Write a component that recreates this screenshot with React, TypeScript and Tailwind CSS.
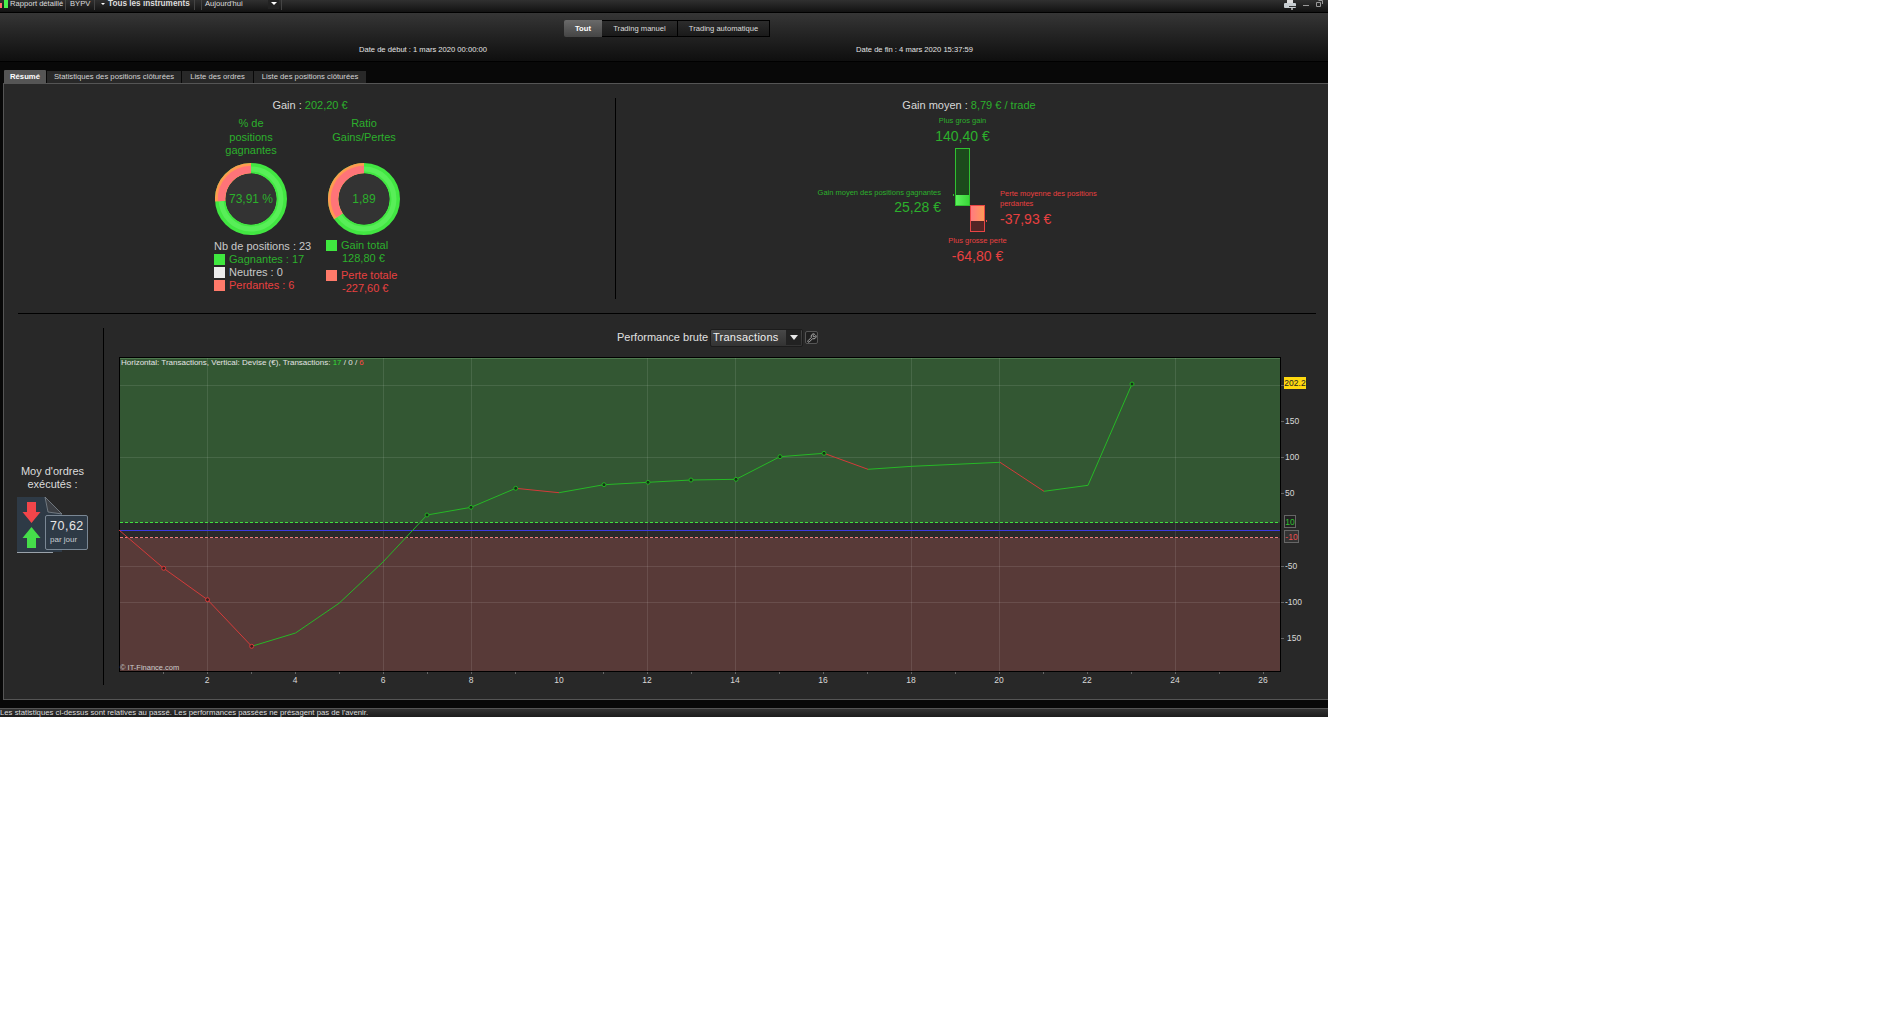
import React from 'react';
import { Wrench } from 'lucide-react';

const points: [number, number][] = [
  [119, 530], [163.7, 568.3], [207.5, 599.7], [251.7, 646.3], [295.5, 633], [339, 603.3],
  [383, 562], [427, 515], [471, 507.3], [515.7, 488.3], [559, 492.7], [604, 484.7],
  [648, 482.3], [691, 480], [736, 479.3], [780, 456.7], [824, 453.3], [868, 469.3],
  [912, 466.3], [956, 464.3], [1000, 462.3], [1044, 491.3], [1088, 485.3], [1132, 384],
];
const redMarkers = [1, 2, 3];
const greenMarkers = [7, 8, 9, 11, 12, 13, 14, 15, 16, 23];
const gridX = [207, 383, 471, 647, 735, 911, 999, 1175];
const gridY = [385.5, 457.5, 566.5, 602.5];
const xLabels = [2, 4, 6, 8, 10, 12, 14, 16, 18, 20, 22, 24, 26];
const yLabels: [string, number, number][] = [
  ['150', 421, 1285], ['100', 457, 1285], ['50', 493, 1285], ['-50', 566, 1285], ['-100', 602, 1285], ['150', 638, 1287],
];

const Chart = () => (
  <svg width="1209" height="333" viewBox="119 357 1209 333" className="block ml-[15px]" fontFamily="'Liberation Sans', Arial, sans-serif">
    <rect x="119.5" y="357.5" width="1161" height="314" fill="#2a2a2a" />
    <rect x="120" y="358" width="1160" height="164.5" fill="#335733" />
    <rect x="120" y="538" width="1160" height="133" fill="#583a38" />
    <rect x="120" y="358" width="1160" height="1" fill="#4f7a4f" />
    {gridX.map(x => <line key={x} x1={x + 0.5} x2={x + 0.5} y1="358" y2="671" stroke="#ffffff" strokeOpacity="0.1" />)}
    {gridY.map(y => <line key={y} x1="120" x2="1280" y1={y} y2={y} stroke="#ffffff" strokeOpacity="0.1" />)}
    <line x1="120" x2="1280" y1="522.5" y2="522.5" stroke="#3fe03f" strokeDasharray="3 2" />
    <line x1="120" x2="1280" y1="537.5" y2="537.5" stroke="#ef7a7a" strokeDasharray="3 2" />
    <line x1="120" x2="1280" y1="530.5" y2="530.5" stroke="#3a3ae0" />
    <rect x="119.5" y="357.5" width="1161" height="314" fill="none" stroke="#000000" />
    {points.slice(1).map((p, i) => (
      <line key={i} x1={points[i][0]} y1={points[i][1]} x2={p[0]} y2={p[1]} stroke={p[1] > points[i][1] ? '#d43a3a' : '#26b826'} />
    ))}
    {redMarkers.map(i => <circle key={i} cx={points[i][0]} cy={points[i][1]} r="2" fill="#3a2020" stroke="#d93a3a" />)}
    {greenMarkers.map(i => <circle key={i} cx={points[i][0]} cy={points[i][1]} r="2" fill="#163016" stroke="#22b022" />)}
    <text x="121" y="365" fontSize="8" fill="#e4e4e4">
      Horizontal: Transactions, Vertical: Devise (€), Transactions: <tspan fill="#33dd33">17</tspan> / 0 / <tspan fill="#ff4444">6</tspan>
    </text>
    <text x="120" y="670" fontSize="7.5" fill="#cccccc">© IT-Finance.com</text>
    {Array.from({ length: 26 }, (_, i) => i + 1).map(n => (
      <line key={n} x1={119.5 + 44 * n} x2={119.5 + 44 * n} y1="672" y2="674" stroke="#666666" />
    ))}
    {xLabels.map(n => <text key={n} x={119 + 44 * n} y="683" fontSize="8.5" fill="#d8d8d8" textAnchor="middle">{n}</text>)}
    {[385.5, 421.5, 457.5, 493.5, 566.5, 602.5, 638.5].map(y => <line key={y} x1="1281" x2="1284" y1={y} y2={y} stroke="#666666" />)}
    {yLabels.map(([t, y, x]) => <text key={y} x={x} y={y + 3} fontSize="8.5" fill="#d8d8d8">{t}</text>)}
    <rect x="1284" y="377" width="22" height="12" fill="#ffd90f" />
    <text x="1295" y="386" fontSize="8.5" fill="#222222" textAnchor="middle">202.2</text>
    <rect x="1284.5" y="515.5" width="11" height="12" fill="#222222" stroke="#666666" />
    <text x="1290" y="525" fontSize="8.5" fill="#30c030" textAnchor="middle">10</text>
    <rect x="1284.5" y="530.5" width="14" height="12" fill="#333333" stroke="#666666" />
    <text x="1291.5" y="540" fontSize="8.5" fill="#e85050" textAnchor="middle">-10</text>
  </svg>
);

const arc = (r: number, deg: number) => {
  const a = (deg * Math.PI) / 180;
  return `M 36 ${36 - r} A ${r} ${r} 0 0 0 ${36 - r * Math.sin(a)} ${36 - r * Math.cos(a)}`;
};

const Donut = ({ red, label }: { red: number; label: string }) => (
  <div className="relative w-[72px] h-[72px] mx-auto">
    <svg width="72" height="72" viewBox="0 0 72 72" className="block">
      <circle cx="36" cy="36" r="30.7" fill="none" stroke="#42e642" strokeWidth="10.6" />
      <circle cx="36" cy="36" r="30" fill="none" stroke="#58ee58" strokeWidth="5" />
      <path d={arc(30.7, red)} fill="none" stroke="#ff9a50" strokeWidth="10.6" />
      <path d={arc(29.5, red)} fill="none" stroke="#ff7478" strokeWidth="7.5" />
      <circle cx="36" cy="36" r="25.4" fill="#333333" />
    </svg>
    <span className="absolute inset-0 flex items-center justify-center text-[12px] text-[#2cb02c]">{label}</span>
  </div>
);

const Swatch = ({ color }: { color: string }) => <span className={`w-[11px] h-[11px] shrink-0 ${color}`} />;

const DocIcon = () => (
  <div className="relative w-[71px] h-[56px] mt-[6px]">
    <svg width="46" height="56" viewBox="0 0 46 56" className="block">
      <path d="M0 0 H28 L45 17 V55 H0 Z" fill="#2e3a46" />
      <path d="M28 0 L45 17 L31 15 Z" fill="#3c3f44" stroke="#8a929a" strokeWidth="0.7" />
      <line x1="0" x2="36" y1="55.5" y2="55.5" stroke="#9aa2aa" />
      <path d="M10 5 H19 V15 H23.5 L14.5 26 L5.5 15 H10 Z" fill="#f2454a" />
      <path d="M10 51 H19 V41 H23.5 L14.5 30 L5.5 41 H10 Z" fill="#45dd4a" />
    </svg>
    <div className="absolute left-[28px] top-[18px] w-[43px] h-[35px] rounded-[2px] border border-[#7a8794] bg-[#2e3a46] pl-[4px] pt-[3px] text-[#e6e6e6]">
      <div className="text-[12.5px] leading-[15px] tracking-[0.5px]">70,62</div>
      <div className="text-[8px] leading-[11px] text-[#c8ccd0]">par jour</div>
    </div>
  </div>
);

export default function App() {
  return (
    <div className="min-h-screen bg-white font-['Liberation_Sans',Arial,sans-serif]">
      <div className="w-[1328px] h-[717px] overflow-hidden flex flex-col bg-[#080808]">
        {/* top toolbar */}
        <div className="h-[13px] shrink-0 flex items-start overflow-hidden whitespace-nowrap border-b border-black bg-gradient-to-b from-[#303030] to-[#121212] text-[7.6px] leading-[7px] text-[#dddddd]">
          <svg width="9" height="9" viewBox="0 0 9 9" className="shrink-0">
            <rect x="0" y="3" width="2" height="5" fill="#ff6a6a" />
            <rect x="4" y="0" width="4" height="8" fill="#4cf04c" />
          </svg>
          <span className="w-[57px] pl-[1px] border-r border-[#444] h-[10px]">Rapport détaillé</span>
          <span className="w-[29px] pl-[4px] border-r border-[#444] h-[10px]">BYPV</span>
          <span className="w-[100px] flex gap-[3px] pl-[6px] border-r border-[#444] h-[10px] font-bold text-[8.2px]">
            <span className="mt-[3px] w-0 h-0 border-x-[2px] border-x-transparent border-t-[2px] border-t-white" />
            <span>Tous les instruments</span>
          </span>
          <span className="ml-[6px] w-[81px] flex justify-between pl-[3px] pr-[2px] border-x border-[#444] h-[10px]">
            <span>Aujourd'hui</span>
            <span className="w-[11px] h-[9px] flex justify-center pt-[2px] bg-[#222]">
              <span className="w-0 h-0 border-x-[3px] border-x-transparent border-t-[3px] border-t-white" />
            </span>
          </span>
          <div className="ml-auto mr-[5px] flex items-start gap-[7px]">
            <svg width="12" height="10" viewBox="0 0 12 10">
              <rect x="3" y="0" width="6" height="3" fill="#dddddd" />
              <rect x="0" y="3" width="12" height="5" rx="1" fill="#c8ced2" />
              <rect x="5" y="6" width="7" height="1" fill="#333333" />
              <rect x="7" y="8" width="2" height="2" fill="#999999" />
            </svg>
            <span className="mt-[5px] w-[6px] h-[1px] bg-[#999]" />
            <svg width="7" height="7" viewBox="0 0 7 7">
              <path d="M2.5 .5 H6.5 V4 M.5 2.5 H4.5 V6.5 H.5 Z" fill="none" stroke="#999999" />
            </svg>
          </div>
        </div>

        {/* period selector */}
        <div className="h-[49px] shrink-0 border-b border-black bg-gradient-to-b from-[#363636] to-[#0f0f0f]">
          <div className="ml-[564px] mt-[7px] flex h-[17px] text-[7.6px] text-[#dddddd]">
            <span className="w-[38px] flex items-center justify-center rounded-l-[2px] bg-gradient-to-b from-[#6a6a6a] to-[#454545] font-bold text-white">Tout</span>
            <span className="w-[76px] flex items-center justify-center border-y border-r border-black bg-gradient-to-b from-[#2c2c2c] to-[#1a1a1a]">Trading manuel</span>
            <span className="w-[92px] flex items-center justify-center border-y border-r border-black bg-gradient-to-b from-[#2c2c2c] to-[#1a1a1a]">Trading automatique</span>
          </div>
          <div className="flex mt-[7px] text-[7.6px] leading-[12px] text-[#e4e4e4] whitespace-nowrap">
            <span className="ml-[359px] w-[128px]">Date de début : 1 mars 2020 00:00:00</span>
            <span className="ml-[369px]">Date de fin : 4 mars 2020 15:37:59</span>
          </div>
        </div>

        {/* tabs */}
        <div className="h-[21px] shrink-0 flex items-end pl-[4px] gap-[1px] bg-[#080808] text-[7.7px] text-[#d4d4d4] whitespace-nowrap">
          <span className="w-[42px] h-[13px] flex items-center justify-center rounded-t-[1px] bg-[#555555] text-white font-bold">Résumé</span>
          <span className="w-[134px] h-[12px] flex items-center justify-center bg-[#282828]">Statistiques des positions clôturées</span>
          <span className="w-[71px] h-[12px] flex items-center justify-center bg-[#282828]">Liste des ordres</span>
          <span className="w-[112px] h-[12px] flex items-center justify-center bg-[#282828]">Liste des positions clôturées</span>
        </div>

        {/* main panel */}
        <div className="h-[617px] shrink-0 ml-[3px] border-t border-l border-b border-[#555555] bg-[#282828] text-[11px]">
          <div className="flex h-[229px]">
            {/* left summary */}
            <div className="w-[612px] shrink-0 relative flex flex-col">
              <div className="mt-[14px] h-[14px] leading-[14px] text-center text-[#d8d8d8]">
                Gain : <span className="text-[#2cb02c]">202,20 €</span>
              </div>
              <div className="mt-[4px] pl-[197px] flex gap-[13px]">
                <div className="w-[100px]">
                  <div className="h-[47px] w-[70px] mx-auto pt-[1px] text-center leading-[13.5px] text-[#2cb02c]">% de positions gagnantes</div>
                  <Donut red={94} label="73,91 %" />
                  <div className="mt-[5px] pl-[13px] leading-[13px] whitespace-nowrap">
                    <div className="text-[#c8c8c8]">Nb de positions : 23</div>
                    <div className="flex items-center gap-[4px] text-[#2cb02c]"><Swatch color="bg-[#3fe83f]" />Gagnantes : 17</div>
                    <div className="flex items-center gap-[4px] text-[#c8c8c8]"><Swatch color="bg-[#ececec]" />Neutres : 0</div>
                    <div className="flex items-center gap-[4px] text-[#e84040]"><Swatch color="bg-[#ff7a6a]" />Perdantes : 6</div>
                  </div>
                </div>
                <div className="w-[100px]">
                  <div className="h-[47px] pt-[1px] text-center leading-[13.5px] text-[#2cb02c]">Ratio<br />Gains/Pertes</div>
                  <Donut red={124} label="1,89" />
                  <div className="mt-[4px] pl-[12px] leading-[13px] whitespace-nowrap">
                    <div className="flex items-center gap-[4px] h-[13px] text-[#2cb02c]"><Swatch color="bg-[#3fe83f]" />Gain total</div>
                    <div className="pl-[16px] text-[#2cb02c]">128,80 €</div>
                    <div className="mt-[4px] flex items-center gap-[4px] h-[13px] text-[#e84040]"><Swatch color="bg-[#ff7a6a]" />Perte totale</div>
                    <div className="pl-[16px] text-[#e84040]">-227,60 €</div>
                  </div>
                </div>
              </div>
              <div className="absolute right-0 top-[14px] h-[201px] w-px bg-black" />
            </div>

            {/* right summary */}
            <div className="flex-1 flex flex-col">
              <div className="mt-[14px] h-[14px] leading-[14px] text-center pr-[6px] text-[#d8d8d8]">
                Gain moyen : <span className="text-[#2cb02c]">8,79 € / trade</span>
              </div>
              <div className="mt-[4px] ml-[201px] flex items-start">
                <div className="w-[124px] pt-[72px] text-right text-[#2cb02c] whitespace-nowrap">
                  <div className="text-[7.5px] leading-[10px]">Gain moyen des positions gagnantes</div>
                  <div className="mt-[1px] text-[14px] leading-[16px]">25,28 €</div>
                </div>
                <div className="ml-[14px] w-[30px]">
                  <div className="ml-[-25px] mr-[-10px] h-[32px] text-center whitespace-nowrap text-[#2cb02c]">
                    <div className="h-[12px] text-[7.5px] leading-[10px]">Plus gros gain</div>
                    <div className="text-[14px] leading-[16px]">140,40 €</div>
                  </div>
                  <div className="relative w-[15px] h-[58px] flex flex-col justify-end border border-[#30c030] bg-[#1c4a1c]">
                    <div className="h-[10px] bg-gradient-to-r from-[#5cf05c] to-[#38d838]" />
                    <span className="absolute left-[-3px] bottom-[9px] w-px h-[2px] bg-[#30c030]" />
                  </div>
                  <div className="relative ml-[15px] mt-[-1px] w-[15px] h-[27px] border border-[#e84545] bg-[#532525]">
                    <div className="h-[15px] bg-gradient-to-r from-[#ff7a80] to-[#ff9a55]" />
                    <span className="absolute right-[-3px] top-[14px] w-px h-[2px] bg-[#e84545]" />
                  </div>
                  <div className="ml-[-10px] mr-[-25px] mt-[4px] text-center whitespace-nowrap text-[#e84040]">
                    <div className="h-[12px] text-[7.5px] leading-[10px]">Plus grosse perte</div>
                    <div className="text-[14px] leading-[16px]">-64,80 €</div>
                  </div>
                </div>
                <div className="ml-[15px] w-[100px] pt-[73px] text-[#e84040]">
                  <div className="text-[7.5px] leading-[10px]">Perte moyenne des positions perdantes</div>
                  <div className="mt-[2px] text-[14px] leading-[16px]">-37,93 €</div>
                </div>
              </div>
            </div>
          </div>

          <div className="h-px ml-[14px] mr-[12px] bg-black" />

          <div className="flex pt-[14px]">
            <div className="w-[100px] h-[357px] shrink-0 border-r border-black flex flex-col items-center pt-[137px] pr-[2px] text-[#dcdcdc]">
              <div className="text-center leading-[13px] whitespace-nowrap">Moy d'ordres<br />exécutés :</div>
              <DocIcon />
            </div>
            <div className="flex-1">
              <div className="h-[19px] mb-[10px] ml-[513px] flex items-center text-[#e0e0e0] whitespace-nowrap">
                <span className="w-[93px]">Performance brute</span>
                <div className="w-[93px] h-[18px] flex items-center justify-between pl-[2px] pr-[1px] rounded-[2px] border border-[#1c1c1c] bg-gradient-to-b from-[#484848] to-[#333333] tracking-[0.25px] text-[#f0f0f0]">
                  <span>Transactions</span>
                  <span className="w-[15px] h-[15px] flex items-center justify-center bg-[#222222]">
                    <span className="w-0 h-0 border-x-[4px] border-x-transparent border-t-[5px] border-t-[#e8e8e8]" />
                  </span>
                </div>
                <div className="ml-[2px] w-[13px] h-[13px] flex items-center justify-center rounded-[2px] border border-[#555] bg-[#1f1f1f]">
                  <Wrench size={10} strokeWidth={1.6} className="text-[#e8e8e8]" />
                </div>
              </div>
              <Chart />
            </div>
          </div>
        </div>

        {/* disclaimer */}
        <div className="h-[8px] shrink-0 bg-[#080808]" />
        <div className="h-[9px] shrink-0 overflow-hidden border-t border-[#555555] bg-gradient-to-b from-[#333333] to-[#1c1c1c] text-[7.75px] leading-[8px] text-[#dddddd] whitespace-nowrap">
          Les statistiques ci-dessus sont relatives au passé. Les performances passées ne présagent pas de l'avenir.
        </div>
      </div>
    </div>
  );
}
